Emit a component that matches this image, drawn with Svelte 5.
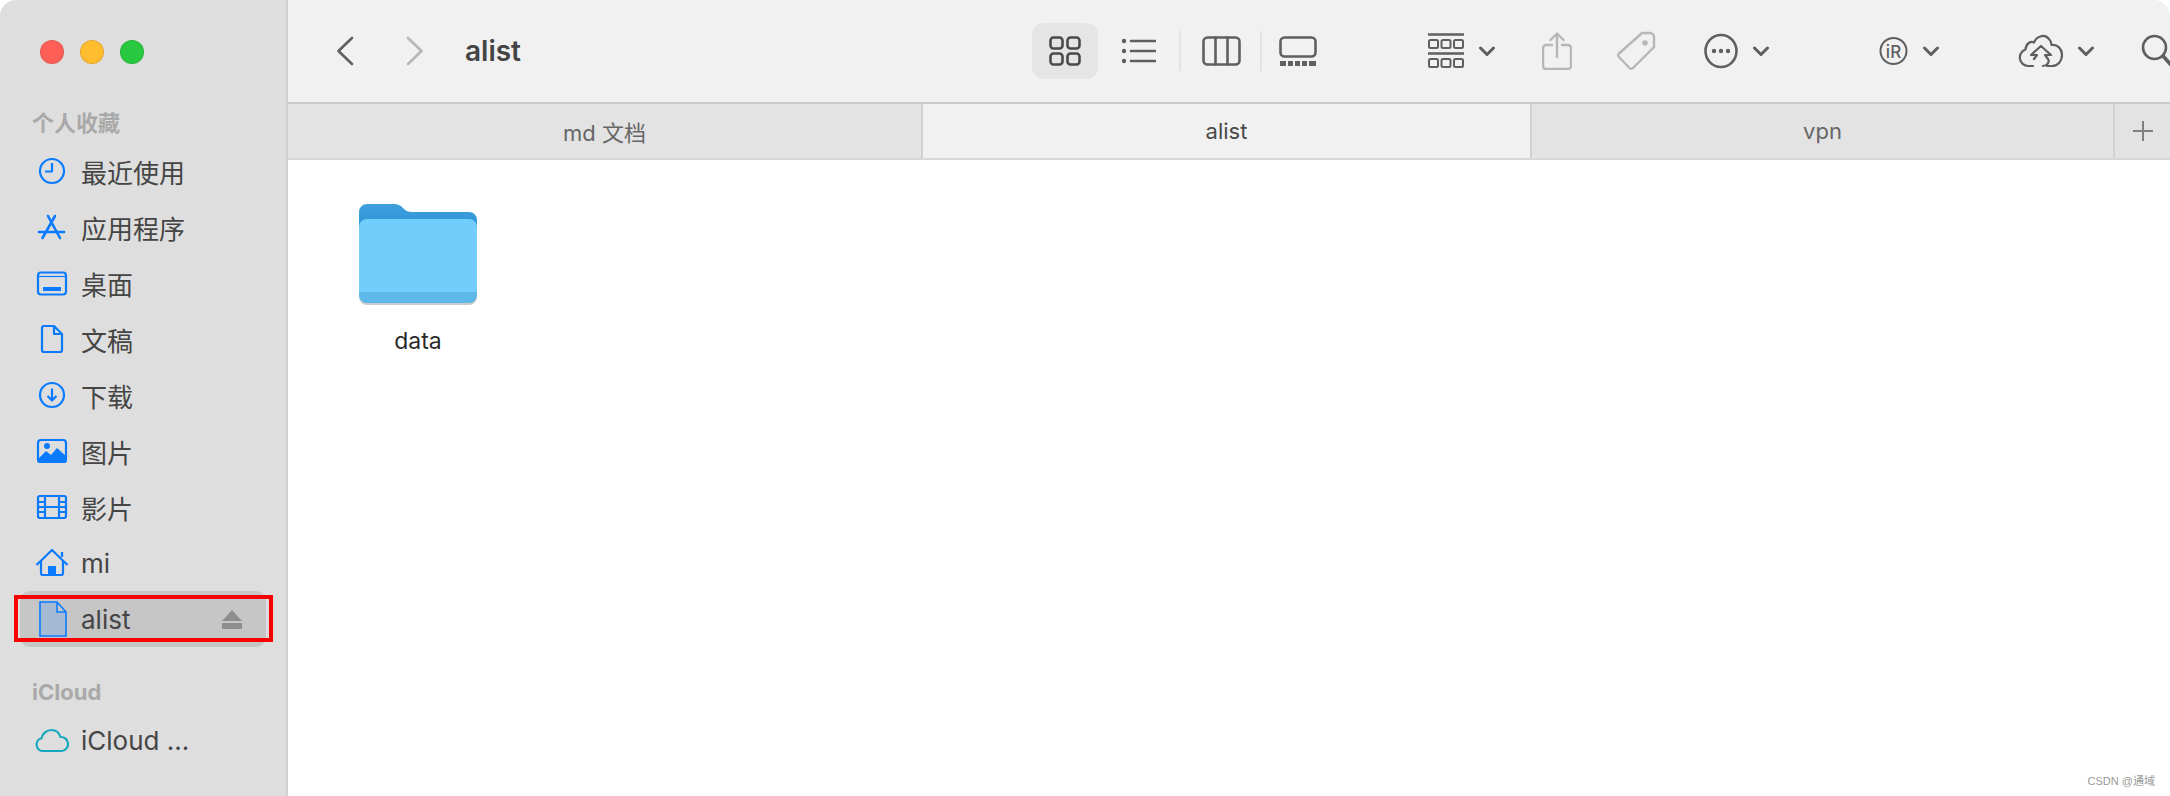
<script lang="ts">
	const favourites = ['最近使用', '应用程序', '桌面', '文稿', '下载', '图片', '影片', 'mi'];
	const tabs = [
		{ label: 'md 文档', width: 635, active: false },
		{ label: 'alist', width: 609, active: true },
		{ label: 'vpn', width: 583, active: false }
	];
</script>

{#snippet chevron()}
	<svg class="chevron" width="18" height="11" viewBox="0 0 18 11"><path d="M2.5 2 9 8.5 15.5 2" /></svg>
{/snippet}

<div class="window">
	<aside class="sidebar">
		<div class="lights">
			<span class="light red"></span>
			<span class="light yellow"></span>
			<span class="light green"></span>
		</div>
		<div class="section-title">个人收藏</div>
		{#each favourites as item, i}
			<div class="row">
				<svg class="row-icon" width="36" height="36" viewBox="0 0 36 36">
					{#if i === 0}
						<circle cx="18" cy="18" r="12" />
						<path d="M18 10v8.5h-7" />
					{:else if i === 1}
						<path d="M14 7l12 22M21 7 8.500 29M5 23h25" stroke-linecap="round" stroke-width="2.600" />
					{:else if i === 2}
						<rect x="4" y="7.500" width="28" height="22" rx="3" />
						<path d="M4 11.500h28" stroke-width="1.200" />
						<rect class="solid" x="9" y="22" width="18" height="4" />
					{:else if i === 3}
						<path d="M10 5h10l8 8v16a2 2 0 0 1-2 2H10a2 2 0 0 1-2-2V7a2 2 0 0 1 2-2zM20 5v8h8" />
					{:else if i === 4}
						<circle cx="18" cy="18" r="12" />
						<path d="M18 11.500v12M13.500 19l4.500 4.500 4.500-4.500" />
					{:else if i === 5}
						<rect x="4" y="7" width="28" height="22" rx="3" />
						<circle class="solid" cx="13" cy="13" r="3" />
						<path class="solid" d="M3 27 12 18l5 4 6-7 10 9v3a3 3 0 0 1-3 3H6a3 3 0 0 1-3-3z" />
					{:else if i === 6}
						<rect x="4" y="7" width="28" height="22" rx="2" />
						<path d="M11 7v22M25 7v22M11 18h14M4 13h7M4 18h7M4 23h7M25 13h7M25 18h7M25 23h7" />
					{:else}
						<path d="M2.500 20 18 5l15.500 15M7 16v12a2 2 0 0 0 2 2h18a2 2 0 0 0 2-2V16M28 12V7" />
						<rect class="solid" x="14" y="21" width="8" height="9" />
					{/if}
				</svg>
				<span class="row-label">{item}</span>
			</div>
		{/each}
		<div class="row selected">
			<svg class="row-icon" width="36" height="36" viewBox="0 0 36 36">
				<path class="doc" d="M6 1h17l9 10v24H6zM23 1v10h9" />
			</svg>
			<span class="row-label">alist</span>
			<svg class="eject" width="20" height="19" viewBox="0 0 20 19">
				<path d="M10 0 20 11H0z" />
				<rect y="13" width="20" height="6" rx="1" />
			</svg>
			<span class="red-mark"></span>
		</div>
		<div class="section-title cloud-title">iCloud</div>
		<div class="row">
			<svg class="row-icon teal" width="36" height="36" viewBox="0 0 36 36">
				<path d="M9 29a6.500 6.500 0 0 1-1.500-12.800C8.500 11.500 12.500 8 17.500 8c4.500 0 7.800 3 9 7a7 7 0 0 1 1 14z" />
			</svg>
			<span class="row-label">iCloud …</span>
		</div>
	</aside>

	<main class="main">
		<header class="toolbar">
			<div class="nav">
				<svg class="icon" width="20" height="30" viewBox="0 0 20 30"><path d="M17 2 3.500 15 17 28" /></svg>
				<svg class="icon off forward" width="20" height="30" viewBox="0 0 20 30"><path d="M3 2l13.500 13L3 28" /></svg>
				<span class="title">alist</span>
			</div>
			<div class="views">
				<span class="view-on">
					<svg class="icon dark" width="32" height="30" viewBox="0 0 32 30">
						<rect x="1.500" y="1.500" width="12" height="11" rx="3" />
						<rect x="18.500" y="1.500" width="12" height="11" rx="3" />
						<rect x="1.500" y="17.500" width="12" height="11" rx="3" />
						<rect x="18.500" y="17.500" width="12" height="11" rx="3" />
					</svg>
				</span>
				<svg class="icon list" width="35" height="26" viewBox="0 0 35 26">
					<path d="M10 3h24M10 13h24M10 23h24" />
					<circle class="fill" cx="3" cy="3" r="2.200" />
					<circle class="fill" cx="3" cy="13" r="2.200" />
					<circle class="fill" cx="3" cy="23" r="2.200" />
				</svg>
				<span class="divider"></span>
				<svg class="icon columns" width="39" height="30" viewBox="0 0 39 30">
					<rect x="1.500" y="1.500" width="36" height="27" rx="4" />
					<path d="M13.500 1.500v27M25.500 1.500v27" />
				</svg>
				<span class="divider second"></span>
				<svg class="icon gallery" width="38" height="30" viewBox="0 0 38 30">
					<rect x="1.500" y="1.500" width="35" height="19" rx="4" />
					<rect class="fill" x="1" y="25" width="6" height="5" />
					<rect class="fill" x="9" y="25" width="5" height="5" />
					<rect class="fill" x="16" y="25" width="5" height="5" />
					<rect class="fill" x="23" y="25" width="5" height="5" />
					<rect class="fill" x="30" y="25" width="7" height="5" />
				</svg>
			</div>
			<div class="actions">
				<span class="action group-by">
					<svg class="icon" width="36" height="36" viewBox="0 0 36 36">
						<path d="M0 1.500h36M0 20.500h36" />
						<g stroke-width="2">
							<rect x="1" y="7" width="9" height="8" rx="1.500" />
							<rect x="13.500" y="7" width="9" height="8" rx="1.500" />
							<rect x="26" y="7" width="9" height="8" rx="1.500" />
							<rect x="1" y="26" width="9" height="8" rx="1.500" />
							<rect x="13.500" y="26" width="9" height="8" rx="1.500" />
							<rect x="26" y="26" width="9" height="8" rx="1.500" />
						</g>
					</svg>
					{@render chevron()}
				</span>
				<svg class="icon off share" width="30" height="38" viewBox="0 0 30 38">
					<path d="M10 13H4a3 3 0 0 0-3 3v18a3 3 0 0 0 3 3h22a3 3 0 0 0 3-3V16a3 3 0 0 0-3-3h-6M15 25V2M8.500 8 15 1.500 21.500 8" stroke-width="2.400" />
				</svg>
				<svg class="icon off tag" width="40" height="40" viewBox="0 0 40 40">
					<path d="M26 2h8a4 4 0 0 1 4 4v10L17 37a2.500 2.500 0 0 1-3.500 0L3 26a2.500 2.500 0 0 1 0-3.500z" stroke-width="2.400" />
					<circle class="fill" cx="29" cy="12" r="2.800" />
				</svg>
				<span class="action more">
					<svg class="icon" width="34" height="36" viewBox="0 0 34 36">
						<ellipse cx="17" cy="18" rx="15.500" ry="16" />
						<circle class="fill" cx="10" cy="18" r="2.200" />
						<circle class="fill" cx="17" cy="18" r="2.200" />
						<circle class="fill" cx="24" cy="18" r="2.200" />
					</svg>
					{@render chevron()}
				</span>
				<span class="action app-r">
					<svg class="icon" width="29" height="30" viewBox="0 0 29 30">
						<circle cx="14.500" cy="15" r="13" stroke-width="2" />
						<text class="r-mark" x="14.500" y="21.500" text-anchor="middle">iR</text>
					</svg>
					{@render chevron()}
				</span>
				<span class="action upload">
					<svg class="icon" width="45" height="34" viewBox="0 0 45 34">
						<path d="M15 32h-5a8.500 8.500 0 0 1-2.500-16.500C8 9 13 7 16 8.500 18 3 26-1 31 5c2 2 2.500 4 2.500 6 6-1 10.500 4 10.500 10 0 6-4 11-10 11h-5" stroke-width="2.200" />
						<path d="M13 21 23 12l10 9h-6l3 4c2 3-1 7-5 7M13 21h6l-3 4" stroke-width="2.200" />
					</svg>
					{@render chevron()}
				</span>
				<svg class="icon search" width="33" height="34" viewBox="0 0 33 34">
					<circle cx="13.500" cy="13.500" r="11.500" />
					<path d="M22 22l9 10" stroke-width="3.600" stroke-linecap="round" />
				</svg>
			</div>
		</header>

		<nav class="tabs">
			{#each tabs as tab}
				<div class="tab" class:active={tab.active} style="width: {tab.width}px">{tab.label}</div>
			{/each}
			<div class="tab-add">
				<svg width="22" height="22" viewBox="0 0 22 22"><path d="M11 1v20M1 11h20" /></svg>
			</div>
		</nav>

		<section class="content">
			<div class="file">
				<svg width="118" height="104" viewBox="0 0 118 104">
					<defs>
						<linearGradient id="back" x1="0" y1="0" x2="0" y2="1">
							<stop offset="0" stop-color="#3f9fdc" />
							<stop offset="1" stop-color="#1a8ad4" />
						</linearGradient>
					</defs>
					<path d="M0 10a8 8 0 0 1 8-8h27c4 0 6 1 9 4 3 3 5 4 9 4h57a8 8 0 0 1 8 8v30H0z" fill="url(#back)" />
					<path d="M0 25a8 8 0 0 1 8-8h102a8 8 0 0 1 8 8v68a8 8 0 0 1-8 8H8a8 8 0 0 1-8-8z" fill="#72cdfb" />
					<path d="M0 90h118v3a8 8 0 0 1-8 8H8a8 8 0 0 1-8-8z" fill="#5db9ea" />
					<path d="M0 93a8 8 0 0 0 8 8h102a8 8 0 0 0 8-8v2a8 8 0 0 1-8 8H8a8 8 0 0 1-8-8z" fill="#9a9a9a" opacity="0.500" />
				</svg>
				<span class="file-name">data</span>
			</div>
			<span class="watermark">CSDN @通域</span>
		</section>
	</main>
</div>

<style>
	:global(body) {
		margin: 0;
		background: #fff;
	}

	.window {
		display: flex;
		width: 2170px;
		height: 796px;
		overflow: hidden;
		border-radius: 16px 16px 0 0;
		font-family: Inter, 'Noto Sans CJK SC', sans-serif;
		color: #4a4a4a;
	}

	.sidebar {
		flex: none;
		box-sizing: border-box;
		width: 288px;
		background: #dedede;
		border-right: 2px solid #d0d0d0;
	}

	.lights {
		display: flex;
		gap: 16px;
		box-sizing: border-box;
		height: 104px;
		padding: 40px 0 0 40px;
	}

	.light {
		box-sizing: border-box;
		width: 24px;
		height: 24px;
		border-radius: 50%;
		border: 1px solid rgba(0, 0, 0, 0.1);
	}

	.red { background: #ff5f57; }
	.yellow { background: #febc2e; }
	.green { background: #28c840; }

	.section-title {
		height: 39px;
		padding-left: 32px;
		font-size: 22px;
		font-weight: 700;
		line-height: 39px;
		color: #a9a9a9;
	}

	.cloud-title {
		margin-top: 25px;
		height: 40px;
		line-height: 40px;
	}

	.row {
		position: relative;
		display: flex;
		align-items: center;
		gap: 11px;
		width: 246px;
		height: 56px;
		margin-left: 20px;
		padding-left: 14px;
		box-sizing: border-box;
		border-radius: 10px;
	}

	.row.selected {
		background: #c6c6c6;
	}

	.row-icon {
		flex: none;
		fill: none;
		stroke: #0a7aff;
		stroke-width: 2.200;
		stroke-linejoin: round;
	}

	.row-icon .solid {
		fill: #0a7aff;
		stroke: none;
	}

	.row-icon .doc {
		fill: #a4bbd3;
		stroke-width: 1.600;
		stroke-linejoin: miter;
	}

	.row-icon.teal {
		stroke: #14a8bd;
	}

	.row-label {
		font-size: 26px;
		color: #454545;
		white-space: nowrap;
	}

	.eject {
		margin-left: auto;
		margin-right: 24px;
		fill: #8e8e8e;
	}

	.red-mark {
		position: absolute;
		left: -6px;
		right: -7px;
		top: 4px;
		bottom: 5px;
		border: 4px solid #f60000;
	}

	.main {
		flex: 1;
		display: flex;
		flex-direction: column;
		min-width: 0;
		background: #fff;
	}

	.toolbar {
		flex: none;
		display: flex;
		align-items: center;
		box-sizing: border-box;
		height: 104px;
		background: #f1f1f1;
		border-bottom: 2px solid #cccccc;
	}

	.icon {
		flex: none;
		fill: none;
		stroke: #5f5f5f;
		stroke-width: 2.600;
		stroke-linecap: round;
		stroke-linejoin: round;
	}

	.icon.off {
		stroke: #b7b7b7;
	}

	.icon.dark {
		stroke: #4a4a4a;
	}

	.icon .fill {
		fill: #5f5f5f;
		stroke: none;
	}

	.icon.off .fill {
		fill: #b7b7b7;
	}

	.nav {
		flex: none;
		display: flex;
		align-items: center;
		box-sizing: border-box;
		width: 744px;
		padding-left: 47px;
	}

	.forward {
		margin-left: 50px;
	}

	.title {
		margin-left: 40px;
		font-size: 28px;
		font-weight: 600;
		color: #444;
	}

	.views {
		flex: none;
		display: flex;
		align-items: center;
	}

	.view-on {
		display: flex;
		align-items: center;
		justify-content: center;
		width: 66px;
		height: 56px;
		border-radius: 12px;
		background: #e5e5e5;
	}

	.list { margin-left: 23px; }
	.columns { margin-left: 21px; }
	.gallery { margin-left: 17px; }

	.divider {
		width: 2px;
		height: 40px;
		margin-left: 23px;
		background: #e2e2e2;
	}

	.divider.second {
		margin-left: 19px;
	}

	.actions {
		flex: none;
		display: flex;
		align-items: center;
		margin-left: 111px;
	}

	.action {
		flex: none;
		display: flex;
		align-items: center;
		gap: 14px;
	}

	.chevron {
		fill: none;
		stroke: #5f5f5f;
		stroke-width: 3;
		stroke-linecap: round;
		stroke-linejoin: round;
	}

	.r-mark {
		font-family: Inter, sans-serif;
		font-size: 17px;
		font-weight: 500;
		fill: #5f5f5f;
		stroke: none;
	}

	.share { margin-left: 46px; }
	.tag { margin-left: 44px; }
	.more { margin-left: 48px; }
	.app-r { margin-left: 109px; }
	.upload { margin-left: 78px; }
	.search { margin-left: 46px; }

	.tabs {
		flex: none;
		display: flex;
		height: 56px;
		box-sizing: border-box;
		background: #e3e3e3;
		border-bottom: 2px solid #d8d8d8;
	}

	.tab {
		flex: none;
		display: flex;
		align-items: center;
		justify-content: center;
		box-sizing: border-box;
		font-size: 22px;
		color: #666;
		border-right: 2px solid #d2d2d2;
	}

	.tab.active {
		background: #f1f1f1;
		color: #4a4a4a;
	}

	.tab-add {
		flex: 1;
		display: flex;
		align-items: center;
		justify-content: center;
	}

	.tab-add svg {
		fill: none;
		stroke: #808080;
		stroke-width: 2;
	}

	.content {
		position: relative;
		flex: 1;
		padding: 42px 0 0 71px;
	}

	.file {
		display: flex;
		flex-direction: column;
		align-items: center;
		width: 118px;
	}

	.file svg {
		display: block;
	}

	.file-name {
		margin-top: 21px;
		font-size: 23px;
		color: #2a2a2a;
	}

	.watermark {
		position: absolute;
		right: 15px;
		bottom: 8px;
		font-family: 'Liberation Sans', 'Noto Sans CJK SC', sans-serif;
		font-size: 11px;
		color: #999;
	}
</style>
